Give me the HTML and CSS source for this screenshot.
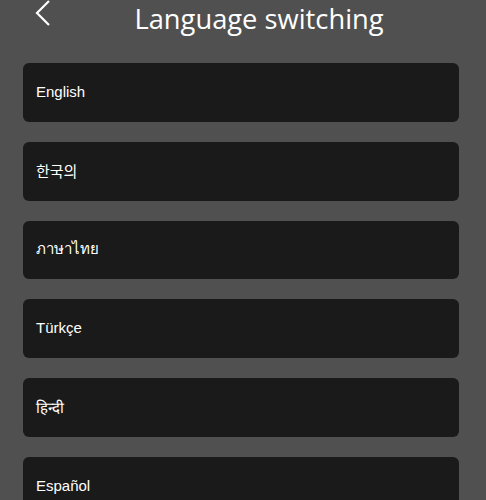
FILE: index.html
```html
<!DOCTYPE html>
<html lang="en">

<head>
    <meta charset="UTF-8" />
    <meta name="viewport" content="width=device-width, initial-scale=1.0" />
    <title>Language switching</title>
    <link rel="stylesheet" href="styles.css">
</head>

<body>

    <div class="header">
        <a class="back" href="#">
            <svg width="18" height="28" viewBox="0 0 18 28">
                <polyline points="15,1 3,13 15,25" fill="none" stroke="#fff" stroke-width="2.2" />
            </svg>
        </a>
        <h1>Language switching</h1>
    </div>

    <div class="list">
        <div class="item">English</div>
        <div class="item">한국의</div>
        <div class="item">ภาษาไทย</div>
        <div class="item">Türkçe</div>
        <div class="item">हिन्दी</div>
        <div class="item">Español</div>
    </div>

</body>

</html>
```

FILE: styles.css
```css
body {
    font-family: "Liberation Sans", Arial, "Noto Sans CJK KR", sans-serif;
    background-color: #505050;
    margin: 0;
    padding: 0;
    color: #fff;
}

.header {
    display: flex;
    align-items: flex-start;
    height: 38px;
    padding: 0 27px 0 23px;
}

.back {
    width: 36px;
    height: 36px;
    display: flex;
    align-items: flex-start;
    padding-left: 11px;
    box-sizing: border-box;
}

.header h1 {
    flex: 1;
    margin: 0;
    text-align: center;
    font-family: "Open Sans", sans-serif;
    font-weight: normal;
    font-size: 27.3px;
    line-height: normal;
}

.list {
    padding: 25px 27px 0 23px;
    display: flex;
    flex-direction: column;
    gap: 20px;
}

.item {
    background-color: #1a1a1a;
    border-radius: 6px;
    height: 58.8px;
    display: flex;
    align-items: center;
    padding: 0 13px 2px;
    box-sizing: border-box;
    font-size: 15px;
}
```
